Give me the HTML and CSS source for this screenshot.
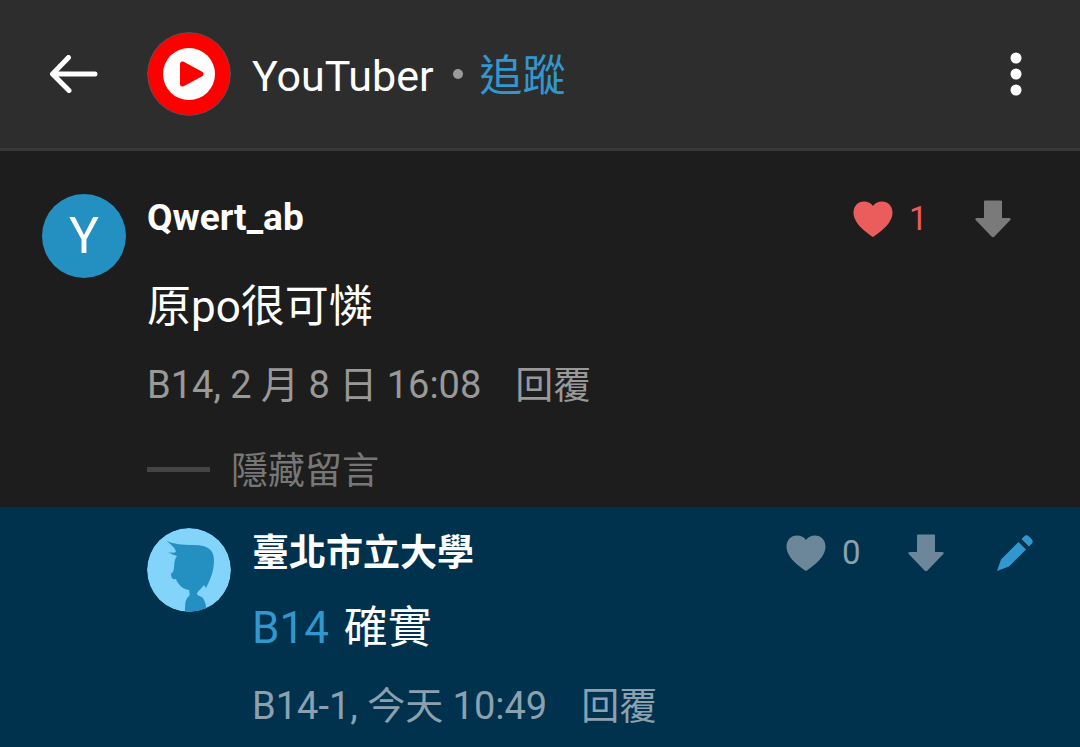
FILE: index.html
```
<!DOCTYPE html>
<html lang="zh-Hant">
  <head>
    <meta charset="UTF-8">
    <meta name="viewport" content="width=device-width, initial-scale=1">
    <title>YouTuber</title>
    <link rel="stylesheet" href="styles.css">
  </head>
  <body>
    <svg class="symbols" aria-hidden="true">
      <symbol id="heart" viewBox="0 0 40 36">
        <path d="M20 36C14 32 .5 23 .5 11.500C.5 5 5 .5 11 .5C15 .5 18 2 20 5C22 2 25 .5 29 .5C35 .5 39.500 5 39.500 11.500C39.500 23 26 32 20 36Z"/>
      </symbol>
      <symbol id="down" viewBox="0 0 36 38">
        <path d="M10 .5H26Q27 .5 27 1.500V18H34.500Q36.500 18.500 35.300 20L19.500 36.500Q18 38 16.500 36.500L.7 20Q-.5 18.500 1.500 18H9V1.500Q9 .5 10 .5Z"/>
      </symbol>
    </svg>

    <header class="topbar">
      <button class="icon-button back" aria-label="返回">
        <svg width="48" height="38" viewBox="0 0 48 38">
          <path d="M18.500 2.500L2.500 19L19 35.500M3 19H45" fill="none" stroke="#fff" stroke-width="5" stroke-linecap="round" stroke-linejoin="round"/>
        </svg>
      </button>
      <svg class="avatar" viewBox="0 0 84 84" aria-hidden="true">
        <circle cx="42" cy="42" r="42" fill="#555"/>
        <circle cx="42" cy="42" r="41" fill="#f00"/>
        <circle cx="42" cy="42" r="26" fill="#fff"/>
        <path d="M35.500 32V52L54 42Z" fill="#f00" stroke="#f00" stroke-width="5" stroke-linejoin="round"/>
      </svg>
      <h1 class="forum">YouTuber</h1>
      <span class="dot"></span>
      <button class="follow">追蹤</button>
      <button class="icon-button more" aria-label="更多">
        <svg width="12" height="44" viewBox="0 0 12 44" fill="#fff">
          <circle cx="6" cy="6" r="5.500"/>
          <circle cx="6" cy="22" r="5.500"/>
          <circle cx="6" cy="38" r="5.500"/>
        </svg>
      </button>
    </header>

    <main>
      <article class="comment">
        <div class="avatar letter">Y</div>
        <div class="content">
          <div class="head">
            <h2 class="name">Qwert_ab</h2>
            <div class="actions">
              <button class="icon-button like liked" aria-label="愛心 1">
                <svg width="40" height="36"><use href="#heart"/></svg>
                <span class="count">1</span>
              </button>
              <button class="icon-button down" aria-label="噓">
                <svg width="36" height="38"><use href="#down"/></svg>
              </button>
            </div>
          </div>
          <p class="text">原po很可憐</p>
          <div class="meta">
            <span>B14, 2 月 8 日 16:08</span>
            <button class="reply-button">回覆</button>
          </div>
          <button class="toggle"><span>隱藏留言</span></button>
        </div>
      </article>

      <article class="comment reply">
        <svg class="avatar" viewBox="0 0 84 84" aria-hidden="true">
          <clipPath id="round"><circle cx="42" cy="42" r="42"/></clipPath>
          <g clip-path="url(#round)">
            <path d="M0 0H84V84H0Z" fill="#82d4fb"/>
            <path d="M20 13C26 16 36 17 46 17C58 17 67 20 67 32C67 44 63 52 59 60L57 57C55 60 52 62 50 65C50 68 53 68 55 69C58 72 59 77 60 84H38C38 77 38 72 41 69C43 68 43 66 42 62C36 61 31 57 29 51C26 52 24 50 24.500 48C23 47 24 45 26 44C28 40 26 33 30 28C27 27 24 26 21 24C24 25 27 25 29 24C28 19 24 17 20 13Z" fill="#2490c2"/>
          </g>
        </svg>
        <div class="content">
          <div class="head">
            <h2 class="name">臺北市立大學</h2>
            <div class="actions">
              <button class="icon-button like" aria-label="愛心 0">
                <svg width="40" height="36"><use href="#heart"/></svg>
                <span class="count">0</span>
              </button>
              <button class="icon-button down" aria-label="噓">
                <svg width="36" height="38"><use href="#down"/></svg>
              </button>
              <button class="icon-button edit" aria-label="編輯">
                <svg width="36" height="36" viewBox="0 0 36 36">
                  <path d="M21.500 7L29 14.500L12 31.500L0 36L4 24.500ZM24.500 4L27 1.500Q29.500-1 32 1.500L34.500 4Q37 6.500 34.500 9L32 11.500Z"/>
                </svg>
              </button>
            </div>
          </div>
          <p class="text"><a href="#B14">B14</a> 確實</p>
          <div class="meta">
            <span>B14-1, 今天 10:49</span>
            <button class="reply-button">回覆</button>
          </div>
        </div>
      </article>
    </main>
  </body>
</html>
```
FILE: styles.css
```
* {
  box-sizing: border-box;
}

body {
  display: flex;
  flex-direction: column;
  min-height: 100vh;
  margin: 0;
  background-color: #1d1d1d;
  color: #fff;
  font-family: Roboto, "Noto Sans CJK TC", sans-serif;
  font-size: 37px;
  line-height: 48px;
}

h1, h2, p {
  margin: 0;
}

button {
  padding: 0;
  border: 0;
  background: none;
  color: inherit;
  font: inherit;
  cursor: pointer;
}

.symbols {
  position: absolute;
  width: 0;
  height: 0;
}

.icon-button {
  display: flex;
  align-items: center;
}

.topbar {
  display: flex;
  align-items: center;
  height: 151px;
  padding: 0 58px 0 50px;
  background-color: #2d2d2d;
  border-bottom: 3px solid #383838;
}

.avatar {
  flex: none;
  width: 84px;
  height: 84px;
  border-radius: 50%;
}

.back {
  margin-right: 49px;
}

.forum {
  margin-left: 21px;
  padding-top: 4px;
  font-size: 43px;
  font-weight: 400;
}

.dot {
  width: 10px;
  height: 10px;
  margin: 0 17px 0 19px;
  border-radius: 50%;
  background-color: #9b9b9b;
}

.follow {
  padding-top: 4px;
  color: #3397cf;
  font-size: 43px;
}

.more {
  margin-left: auto;
}

main {
  display: flex;
  flex: 1;
  flex-direction: column;
}

.comment {
  display: flex;
  gap: 21px;
  padding: 43px 47px 13px 42px;
}

.reply {
  flex: 1;
  padding-top: 21px;
  padding-left: 147px;
  background-color: #00314d;
}

.letter {
  background-color: #2490c2;
  font-size: 50px;
  line-height: 84px;
  text-align: center;
}

.content {
  flex: 1;
}

.head {
  display: flex;
  justify-content: space-between;
  height: 48px;
}

.name {
  font-size: 37px;
  font-weight: 700;
}

.reply .name {
  padding-top: 2px;
}

.actions {
  display: flex;
  align-items: center;
  padding: 2px 22px 0 0;
}

.reply .actions {
  padding-right: 0;
}

.like {
  gap: 16px;
  color: #999;
}

.like svg, .down svg, .edit svg {
  fill: currentColor;
}

.count {
  width: 20px;
  font-size: 33px;
  text-align: left;
}

.liked {
  color: #eb5c5c;
}

.down {
  margin-left: 46px;
  color: #7a7a7a;
}

.reply .like, .reply .down {
  color: #6b8799;
}

.reply .count {
  color: #8ca1b0;
}

.edit {
  margin-left: 53px;
  color: #3397cf;
}

.text {
  margin-top: 35px;
  font-size: 44px;
  line-height: 60px;
}

.reply .text {
  margin-top: 22px;
}

.text a {
  margin-right: 4px;
  color: #3397cf;
  text-decoration: none;
}

.meta {
  display: flex;
  gap: 34px;
  margin-top: 24px;
  color: #999;
  font-size: 38px;
}

.reply .meta {
  color: #8ca1b0;
}

.toggle {
  display: flex;
  align-items: center;
  gap: 21px;
  height: 48px;
  margin-top: 36px;
  margin-bottom: 1px;
  color: #777;
}

.toggle::before {
  content: "";
  width: 63px;
  height: 5px;
  background-color: #444;
}

.toggle span {
  padding-top: 6px;
}
```
